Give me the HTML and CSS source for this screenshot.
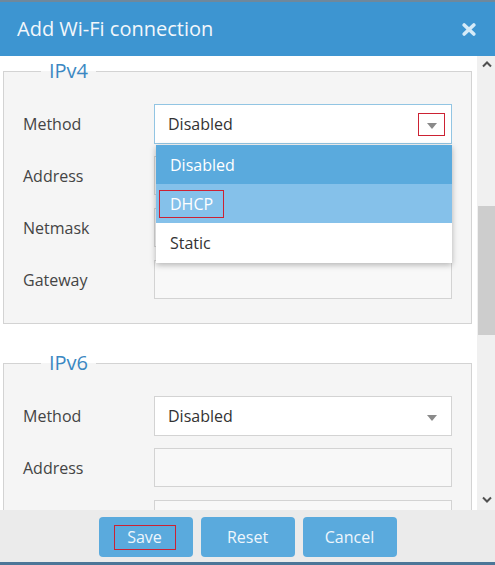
FILE: index.html
```html
<!DOCTYPE html>
<html lang="en">
<head>
<meta charset="utf-8">
<title>Add Wi-Fi connection</title>
<link rel="stylesheet" href="styles.css">
</head>
<body>
<div class="topstrip"></div>
<div class="dialog">
  <header class="dlg-head">
    <h1 class="dlg-title">Add Wi-Fi connection</h1>
    <svg class="close" width="14" height="13" viewBox="0 0 14 13" aria-label="Close">
      <line x1="2.2" y1="2" x2="11.8" y2="11" />
      <line x1="11.8" y1="2" x2="2.2" y2="11" />
    </svg>
  </header>
  <div class="dlg-body">
    <div class="scroll-content">
      <fieldset class="group">
        <legend>IPv4</legend>
        <div class="form-grid">
          <label class="lbl">Method</label>
          <div class="select-wrap">
            <div class="select focused">
              <span>Disabled</span>
              <span class="arrow-box marked"><span class="caret"></span></span>
            </div>
            <ul class="dropdown">
              <li class="opt selected">Disabled</li>
              <li class="opt hover"><span class="mark">DHCP</span></li>
              <li class="opt last">Static</li>
            </ul>
          </div>
          <label class="lbl">Address</label>
          <div class="input"></div>
          <label class="lbl">Netmask</label>
          <div class="input"></div>
          <label class="lbl">Gateway</label>
          <div class="input"></div>
        </div>
      </fieldset>
      <fieldset class="group second">
        <legend>IPv6</legend>
        <div class="form-grid">
          <label class="lbl">Method</label>
          <div class="select-wrap">
            <div class="select">
              <span>Disabled</span>
              <span class="arrow-box"><span class="caret"></span></span>
            </div>
          </div>
          <label class="lbl">Address</label>
          <div class="input"></div>
          <span class="lbl"></span>
          <div class="input"></div>
        </div>
      </fieldset>
    </div>
    <div class="scrollbar">
      <div class="sb-btn">
        <svg width="10" height="7" viewBox="0 0 10 7"><polyline points="1,5.5 5,1.5 9,5.5" /></svg>
      </div>
      <div class="sb-track"><div class="sb-thumb"></div></div>
      <div class="sb-btn down">
        <svg width="10" height="7" viewBox="0 0 10 7"><polyline points="1,1.5 5,5.5 9,1.5" /></svg>
      </div>
    </div>
  </div>
  <footer class="dlg-foot">
    <button class="btn"><span class="mark-btn">Save</span></button>
    <button class="btn">Reset</button>
    <button class="btn">Cancel</button>
  </footer>
</div>
</body>
</html>
```

FILE: styles.css
```css
* { box-sizing: border-box; }

html, body {
  margin: 0;
  padding: 0;
  width: 495px;
  height: 565px;
  overflow: hidden;
  background: #ffffff;
  font-family: "Open Sans", "Liberation Sans", sans-serif;
}

.topstrip {
  height: 2px;
  background: #6f889c;
}

.dialog {
  display: flex;
  flex-direction: column;
  width: 495px;
}

.dlg-head {
  height: 54px;
  background: #3d95d1;
  display: flex;
  align-items: center;
  justify-content: space-between;
  padding: 0 19px 0 17px;
}

.dlg-title {
  margin: 0;
  font-size: 20px;
  font-weight: 400;
  line-height: 54px;
  color: #f2f7fb;
}

.close line {
  stroke: #d6ebf8;
  stroke-width: 3.6;
  stroke-linecap: round;
}

.dlg-body {
  height: 454px;
  display: flex;
  overflow: hidden;
  background: #ffffff;
}

.scroll-content {
  width: 477px;
  flex: none;
}

.group {
  margin: 1px 5px 0 3px;
  padding: 19px 20px 24px 19px;
  border: 1px solid #d3d3d3;
  background: #f5f5f5;
  min-width: 0;
}

.group.second {
  margin-top: 25px;
}

.group legend {
  margin-left: 18px;
  padding: 0 8px;
  font-size: 20px;
  line-height: 28px;
  color: #3b88c2;
}

.form-grid {
  display: grid;
  grid-template-columns: 131px 298px;
  grid-auto-rows: 39px;
  row-gap: 13px;
  align-items: center;
}

.lbl {
  font-size: 16px;
  color: #444444;
}

.select-wrap {
  position: relative;
  height: 39px;
}

.select {
  height: 40px;
  display: flex;
  align-items: center;
  justify-content: space-between;
  padding: 0 6px 0 13px;
  background: #ffffff;
  border: 1px solid #d3d3d3;
  font-size: 16px;
  color: #333333;
}

.select.focused {
  border-color: #92c5e3;
}

.arrow-box {
  width: 27px;
  height: 23px;
  display: flex;
  align-items: center;
  justify-content: center;
  border: 1px solid transparent;
  padding-top: 3px;
}

.arrow-box.marked {
  border-color: #cc2233;
}

.caret {
  width: 0;
  height: 0;
  border-left: 5px solid transparent;
  border-right: 5px solid transparent;
  border-top: 6px solid #8a8a8a;
}

.dropdown {
  position: absolute;
  top: 41px;
  left: 2px;
  right: 0;
  margin: 0;
  padding: 0;
  list-style: none;
  background: #ffffff;
  box-shadow: 0 2px 6px rgba(0, 0, 0, 0.28);
  z-index: 5;
}

.opt {
  height: 39px;
  display: flex;
  align-items: center;
  padding-left: 14px;
  font-size: 16px;
  color: #333333;
}

.opt.last {
  height: 40px;
}

.opt.selected {
  background: #5aaadd;
  color: #ffffff;
}

.opt.hover {
  background: #85c1ea;
  color: #ffffff;
  padding-left: 3px;
}

.mark {
  border: 1px solid #cc2233;
  height: 28px;
  display: flex;
  align-items: center;
  padding: 0 10px;
}

.input {
  height: 39px;
  background: #f8f8f8;
  border: 1px solid #d3d3d3;
}

.scrollbar {
  width: 18px;
  flex: none;
  display: flex;
  flex-direction: column;
  background: #f0f0f0;
}

.sb-btn {
  height: 17px;
  display: flex;
  align-items: center;
  justify-content: center;
  padding-left: 1px;
  flex: none;
}

.sb-btn.down {
  align-items: flex-start;
  padding-top: 3px;
}

.sb-btn polyline {
  fill: none;
  stroke: #505050;
  stroke-width: 2;
}

.sb-track {
  flex: 1;
  padding-left: 1px;
}

.sb-thumb {
  margin-top: 133px;
  height: 129px;
  background: #cdcdcd;
}

.dlg-foot {
  height: 55px;
  background: #ebebeb;
  display: flex;
  justify-content: center;
  align-items: flex-start;
  gap: 8px;
  padding-top: 7px;
  border-bottom: 3px solid #4c7698;
}

.btn {
  width: 94px;
  height: 40px;
  border: none;
  border-radius: 4px;
  background: #5aaadd;
  color: #eef6fc;
  font-family: "Open Sans", "Liberation Sans", sans-serif;
  font-size: 16px;
  display: flex;
  align-items: center;
  justify-content: center;
  padding: 0;
}

.mark-btn {
  border: 1px solid #cc2233;
  height: 25px;
  width: 62px;
  display: flex;
  align-items: center;
  justify-content: center;
  margin-right: 2px;
}
```
